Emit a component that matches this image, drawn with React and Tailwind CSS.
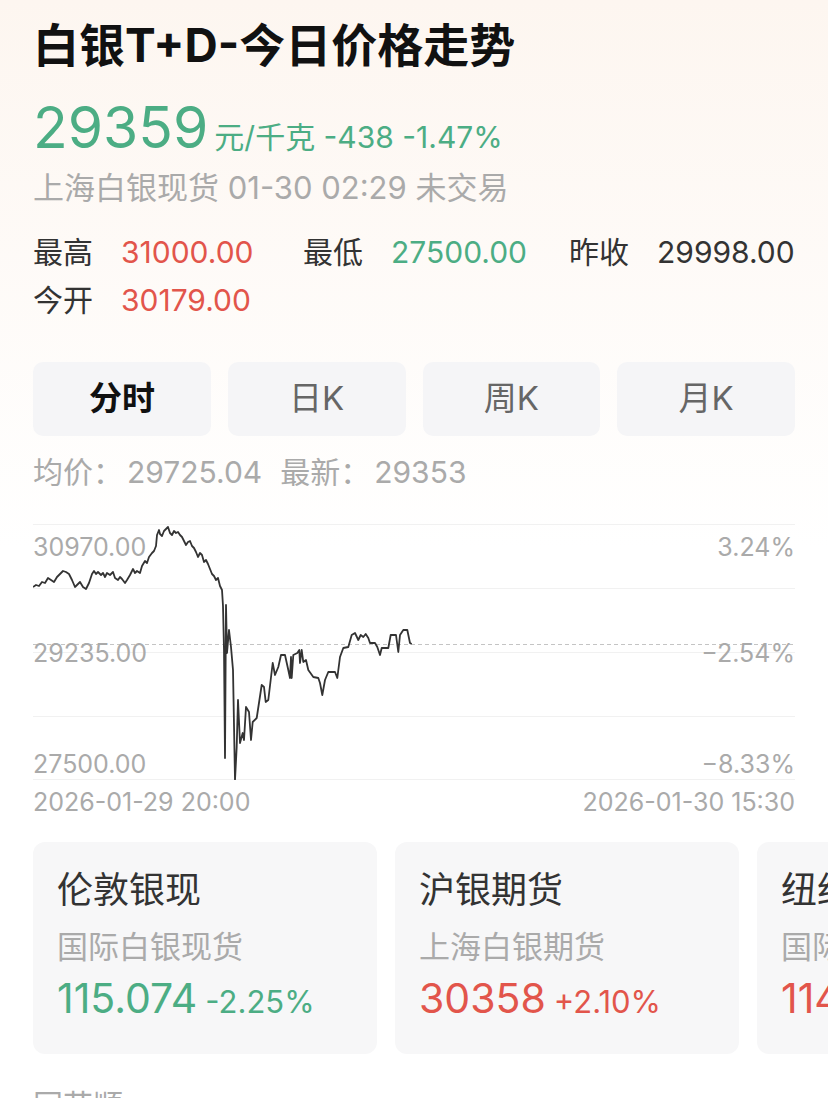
import React from 'react';

const FONT = { fontFamily: '"Inter", "Noto Sans CJK SC", sans-serif' };

const GREEN = 'text-[#4cad84]';
const RED = 'text-[#e2554b]';

const line = [
  [33, 587], [36, 585], [39, 586], [42, 582], [45, 583], [48, 578], [51, 580], [54, 582], [57, 577], [60, 574],
  [63, 571], [66, 572], [69, 574], [72, 580], [75, 587], [77, 585], [80, 582], [83, 587], [86, 589], [89, 583],
  [92, 574], [94, 571], [96, 574], [98, 572], [101, 575], [103, 573], [105, 577], [107, 573], [110, 575], [113, 572],
  [115, 578], [118, 580], [120, 577], [122, 579], [125, 583], [127, 580], [130, 575], [133, 569], [135, 573], [137, 571],
  [140, 573], [142, 566], [145, 561], [147, 563], [149, 557], [152, 553], [154, 551], [156, 546], [157, 535], [159, 530],
  [160, 534], [162, 536], [164, 531], [166, 529], [168, 527], [170, 533], [172, 535], [174, 531], [176, 533], [178, 532],
  [180, 535], [182, 537], [184, 541], [186, 545], [188, 542], [190, 541], [192, 546], [194, 548], [196, 552], [198, 557],
  [200, 553], [202, 555], [204, 562], [206, 560], [208, 564], [210, 569], [212, 574], [214, 576], [216, 580], [218, 578],
  [220, 586], [222, 590], [223, 606], [224, 650], [225, 758], [226, 605], [227, 653], [229, 630], [231, 647], [233, 670],
  [235, 780], [236.7, 747], [238, 700], [240, 743], [242.7, 733], [244, 740], [246, 707], [249, 712], [251, 740], [252.7, 722],
  [256.7, 718], [261.7, 685], [264, 687], [265.7, 702], [268.3, 700], [272.7, 663], [275, 675], [278.3, 667], [281, 655], [285, 655],
  [288.3, 670], [290, 678], [291, 657], [291.7, 678], [293.3, 655], [297.3, 653], [299.3, 650], [300, 663], [301.7, 650], [303.3, 662],
  [306, 660], [308.3, 670], [313.3, 677], [318.3, 678], [320, 683], [322.3, 695], [325, 680], [328.3, 672], [335, 672], [337.3, 678],
  [340, 657], [343.3, 648], [348.3, 647], [351.7, 635], [355, 633], [358.3, 640], [360.7, 635], [363.3, 637], [365.7, 634], [368.3, 638],
  [370, 643], [375, 643], [377.3, 647], [380, 655], [381.7, 648], [388.3, 648], [390.7, 635], [396, 635], [398.3, 652], [400, 635],
  [403.3, 630], [407.3, 630], [410, 643], [411.7, 644],
];

const tabs = ['分时', '日K', '周K', '月K'];

const cards = [
  { name: '伦敦银现', sub: '国际白银现货', price: '115.074', change: '-2.25%', up: false },
  { name: '沪银期货', sub: '上海白银期货', price: '30358', change: '+2.10%', up: true },
  { name: '纽约期银', sub: '国际白银期货', price: '114.815', change: '+1.32%', up: true },
];

const Stat = ({ label, value, color }) => (
  <div className="flex items-center">
    <span className="w-[88px] shrink-0 text-[30px] text-[#333]">{label}</span>
    <span className={`text-[30px] ${color}`}>{value}</span>
  </div>
);

const Chart = () => (
  <div className="relative h-[256px] mt-[32px]">
    <svg className="absolute inset-0" width="762" height="256" viewBox="33 524 762 256">
      {[524.5, 588.5, 652.5, 716.5, 779.5].map(y => (
        <line key={y} x1="33" x2="795" y1={y} y2={y} stroke="#f1f1f1" strokeWidth="1" />
      ))}
      <line x1="33" x2="795" y1="644.5" y2="644.5" stroke="#c4c4c4" strokeWidth="1" strokeDasharray="4 3" />
      <polyline
        points={line.map(p => p.join(',')).join(' ')}
        fill="none"
        stroke="#333"
        strokeWidth="1.8"
        strokeLinejoin="round"
      />
    </svg>
    <div className="absolute left-0 top-[10px] text-[25px] leading-[26px] text-[#aaa]">30970.00</div>
    <div className="absolute right-0 top-[10px] text-[25px] leading-[26px] text-[#aaa]">3.24%</div>
    <div className="absolute left-0 top-[116px] text-[25px] leading-[26px] text-[#aaa]">29235.00</div>
    <div className="absolute right-0 top-[116px] text-[25px] leading-[26px] text-[#aaa]">−2.54%</div>
    <div className="absolute left-0 top-[227px] text-[25px] leading-[26px] text-[#aaa]">27500.00</div>
    <div className="absolute right-0 top-[227px] text-[25px] leading-[26px] text-[#aaa]">−8.33%</div>
  </div>
);

export default function App() {
  return (
    <div style={FONT} className="w-[828px] h-[1098px] overflow-hidden bg-gradient-to-b from-[#fdf6f0] via-white to-white">
      <div className="px-[33px] pt-[16px]">
        <h1 className="text-[46px] leading-[58px] font-bold text-[#111]">白银T+D-今日价格走势</h1>

        <div className={`mt-[22px] flex items-baseline h-[64px] leading-[64px] ${GREEN}`}>
          <span className="text-[57px]">29359</span>
          <span className="ml-[6px] text-[30px]">元/千克 -438 -1.47%</span>
        </div>

        <div className="mt-[8px] text-[31px] leading-[40px] text-[#aaa]">上海白银现货 01-30 02:29 未交易</div>

        <div className="mt-[24px] grid grid-cols-[270px_266px_auto] leading-[40px]">
          <Stat label="最高" value="31000.00" color={RED} />
          <Stat label="最低" value="27500.00" color={GREEN} />
          <Stat label="昨收" value="29998.00" color="text-[#333]" />
        </div>
        <div className="mt-[8px] leading-[40px]">
          <Stat label="今开" value="30179.00" color={RED} />
        </div>

        <div className="mt-[42px] grid grid-cols-4 gap-[17px]">
          {tabs.map((t, i) => (
            <div
              key={t}
              className={`h-[74px] rounded-[10px] bg-[#f5f5f7] flex items-center justify-center text-[33px] ${
                i === 0 ? 'font-bold text-[#111]' : 'text-[#666]'
              }`}
            >
              {t}
            </div>
          ))}
        </div>

        <div className="mt-[16px] text-[30px] leading-[40px] text-[#aaa]">
          均价：<span className="ml-[4px]">29725.04</span>
          <span className="ml-[18px]">最新：</span>
          <span className="ml-[4px]">29353</span>
        </div>

        <Chart />

        <div className="mt-[6px] flex justify-between text-[25px] leading-[32px] text-[#aaa]">
          <span>2026-01-29 20:00</span>
          <span>2026-01-30 15:30</span>
        </div>

        <div className="mt-[24px] -mr-[33px] overflow-hidden">
          <div className="flex gap-[18px]">
            {cards.map(c => (
              <div key={c.name} className="w-[344px] h-[212px] shrink-0 rounded-[12px] bg-[#f7f7f8] pl-[24px] pt-[26px]">
                <div className="text-[36px] leading-[44px] text-[#333]">{c.name}</div>
                <div className="mt-[15px] text-[31px] leading-[40px] text-[#aaa]">{c.sub}</div>
                <div className={`mt-[7px] flex items-baseline leading-[48px] ${c.up ? RED : GREEN}`}>
                  <span className="text-[41px]">{c.price}</span>
                  <span className="ml-[8px] text-[31px]">{c.change}</span>
                </div>
              </div>
            ))}
          </div>
        </div>

        <div className="mt-[31px] text-[30px] leading-[40px] text-[#aaa]">同花顺</div>
      </div>
    </div>
  );
}
